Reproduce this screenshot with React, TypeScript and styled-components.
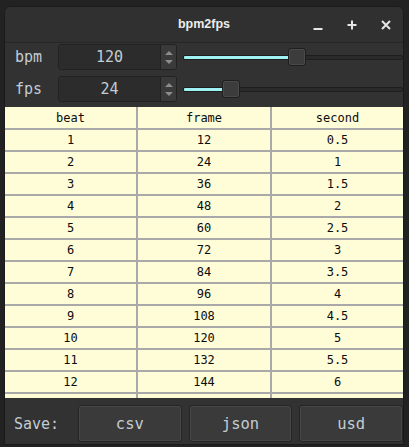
import React from "react";
import styled, { createGlobalStyle } from "styled-components";

const Global = createGlobalStyle`
  html, body { margin: 0; padding: 0; background: #222222; overflow: hidden; }
  body { width: 409px; height: 447px; }
  * { box-sizing: border-box; }
`;

const Screen = styled.div`
  padding: 6px 5px 2px 4px;
`;

const Window = styled.div`
  width: 400px;
  height: 439px;
  border: 1px solid #1b1b1b;
  border-radius: 7px 7px 0 0;
  background: #323232;
  display: flex;
  flex-direction: column;
  overflow: hidden;
`;

const TitleBar = styled.div`
  height: 36px;
  flex: none;
  display: grid;
  grid-template-columns: 1fr auto 1fr;
  align-items: center;
  background: #303030;
  border-bottom: 1px solid #262626;
`;

const Title = styled.div`
  grid-column: 2;
  font-family: "Liberation Sans", Arial, sans-serif;
  font-weight: bold;
  font-size: 12.5px;
  color: #ececec;
  padding-bottom: 1px;
`;

const Controls = styled.div`
  grid-column: 3;
  justify-self: end;
  display: flex;
`;

const WinButton = styled.div`
  width: 34px;
  height: 34px;
  display: flex;
  align-items: center;
  justify-content: center;
`;

const Params = styled.div`
  flex: none;
  display: flex;
  flex-direction: column;
  gap: 6px;
  padding: 1px 0 5px 0;
`;

const Row = styled.div`
  height: 26px;
  display: flex;
  align-items: center;
`;

const Label = styled.div`
  width: 53px;
  padding-left: 10px;
  font-family: "DejaVu Sans Mono", monospace;
  font-size: 15px;
  color: #c2ccd4;
`;

const Spin = styled.div`
  width: 119px;
  height: 26px;
  display: flex;
  border: 1px solid #222222;
  border-radius: 3px;
  overflow: hidden;
`;

const SpinValue = styled.div`
  flex: 1;
  display: flex;
  align-items: center;
  justify-content: center;
  background: #2c2c2c;
  font-family: "DejaVu Sans Mono", monospace;
  font-size: 15px;
  color: #c2ccd4;
`;

const Stepper = styled.div`
  width: 16px;
  background: #3a3a3a;
  border-left: 1px solid #222222;
  display: flex;
  flex-direction: column;
  align-items: center;
  justify-content: center;
  gap: 5px;
`;

const Arrow = styled.div<{ $down?: boolean }>`
  width: 0;
  height: 0;
  border-left: 4px solid transparent;
  border-right: 4px solid transparent;
  ${(p) => (p.$down ? "border-top: 4px solid #8c8c8c;" : "border-bottom: 4px solid #8c8c8c;")}
`;

const Slider = styled.div`
  flex: 1;
  margin-left: 6px;
  height: 26px;
  position: relative;
  display: flex;
  align-items: center;
`;

const Track = styled.div`
  width: 100%;
  height: 5px;
  background: #2a2a2a;
  border: 1px solid #1e1e1e;
  border-radius: 2px;
  overflow: hidden;
`;

const Fill = styled.div`
  height: 100%;
  background: #9ff2f2;
`;

const Thumb = styled.div`
  position: absolute;
  top: 4px;
  width: 18px;
  height: 18px;
  background: #3c3c3c;
  border: 1px solid #1e1e1e;
  border-radius: 3px;
  box-shadow: inset 0 0 0 1px #4a4a4a;
`;

const TableArea = styled.div`
  flex: 1;
  overflow: hidden;
  background: #fffdd8;
`;

const Grid = styled.div`
  display: grid;
  grid-template-columns: 131px 132px 131px;
  grid-auto-rows: 20px;
  grid-template-rows: 21px;
  gap: 2px;
  background: #a9a9a9;
`;

const Cell = styled.div`
  background: #fffdd8;
  display: flex;
  align-items: center;
  justify-content: center;
  font-family: "DejaVu Sans Mono", monospace;
  font-size: 12px;
  color: #0c0c0c;
`;

const SaveBar = styled.div`
  height: 46px;
  flex: none;
  display: flex;
  align-items: center;
  gap: 7px;
  padding: 6px 0 1px 9px;
  background: #323232;
`;

const SaveLabel = styled.div`
  width: 57px;
  font-family: "DejaVu Sans Mono", monospace;
  font-size: 15px;
  color: #c2ccd4;
`;

const SaveButton = styled.div`
  flex: 1;
  height: 37px;
  display: flex;
  align-items: center;
  justify-content: center;
  background: #3a3a3a;
  border: 1px solid #252525;
  border-radius: 3px;
  box-shadow: inset 0 0 0 1px #474747;
  font-family: "DejaVu Sans Mono", monospace;
  font-size: 15.5px;
  color: #c2ccd4;
`;

const params = [
  { name: "bpm", value: 120, min: 1, max: 229 },
  { name: "fps", value: 24, min: 1, max: 120 },
];

const bpm = 120;
const fps = 24;
const rows = Array.from({ length: 12 }, (_, i) => {
  const beat = i + 1;
  const second = (beat * 60) / bpm;
  return [String(beat), String(Math.round(second * fps)), String(second)];
});

export default function App() {
  return (
    <>
      <Global />
      <Screen>
        <Window>
          <TitleBar>
            <Title>bpm2fps</Title>
            <Controls>
              <WinButton>
                <svg width="12" height="12" viewBox="0 0 12 12">
                  <rect x="1.5" y="9" width="9" height="2" fill="#e6e6e6" />
                </svg>
              </WinButton>
              <WinButton>
                <svg width="12" height="12" viewBox="0 0 12 12">
                  <rect x="1.5" y="5" width="9" height="2" fill="#e6e6e6" />
                  <rect x="5" y="1.5" width="2" height="9" fill="#e6e6e6" />
                </svg>
              </WinButton>
              <WinButton>
                <svg width="12" height="12" viewBox="0 0 12 12">
                  <path d="M2 2 L10 10 M10 2 L2 10" stroke="#e6e6e6" strokeWidth="2" />
                </svg>
              </WinButton>
            </Controls>
          </TitleBar>
          <Params>
            {params.map((p) => {
              const frac = (p.value - p.min) / (p.max - p.min);
              return (
                <Row key={p.name}>
                  <Label>{p.name}</Label>
                  <Spin>
                    <SpinValue>{p.value}</SpinValue>
                    <Stepper>
                      <Arrow />
                      <Arrow $down />
                    </Stepper>
                  </Spin>
                  <Slider>
                    <Track>
                      <Fill style={{ width: `calc(${frac} * (100% - 18px) + 2px)` }} />
                    </Track>
                    <Thumb style={{ left: `calc(${frac} * (100% - 18px))` }} />
                  </Slider>
                </Row>
              );
            })}
          </Params>
          <TableArea>
            <Grid>
              <Cell>beat</Cell>
              <Cell>frame</Cell>
              <Cell>second</Cell>
              {rows.map((r) => r.map((c, j) => <Cell key={r[0] + "-" + j}>{c}</Cell>))}
              <Cell />
              <Cell />
              <Cell />
            </Grid>
          </TableArea>
          <SaveBar>
            <SaveLabel>Save:</SaveLabel>
            <SaveButton>csv</SaveButton>
            <SaveButton>json</SaveButton>
            <SaveButton>usd</SaveButton>
          </SaveBar>
        </Window>
      </Screen>
    </>
  );
}
